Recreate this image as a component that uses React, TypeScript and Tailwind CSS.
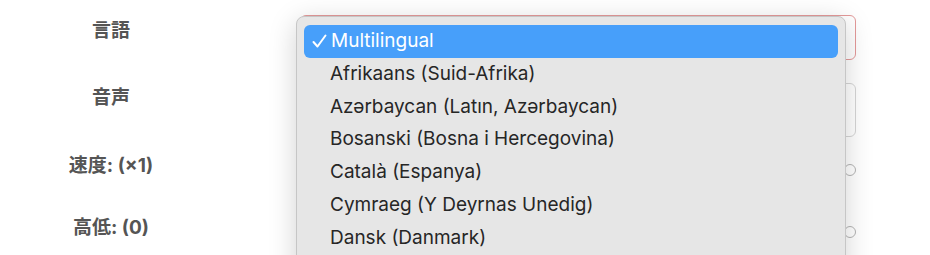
const languages = [
  "Afrikaans (Suid-Afrika)",
  "Azərbaycan (Latın, Azərbaycan)",
  "Bosanski (Bosna i Hercegovina)",
  "Català (Espanya)",
  "Cymraeg (Y Deyrnas Unedig)",
  "Dansk (Danmark)",
];

function Label({ children, className = "" }: { children: React.ReactNode; className?: string }) {
  return (
    <div className={`w-[222px] shrink-0 text-center text-[19px] leading-6 font-bold text-[#555] ${className}`}>
      {children}
    </div>
  );
}

function SliderRow({ label }: { label: string }) {
  return (
    <div className="flex items-center h-[24px]">
      <Label className="mb-[9px]">{label}</Label>
      <div className="ml-[78px] w-[556px] relative h-[12px] flex items-center">
        <div className="w-full h-[4px] rounded-full bg-[#d9d9d9]" />
        <div className="absolute right-0 w-[12px] h-[12px] rounded-full bg-white border border-[#b5b5b5]" />
      </div>
    </div>
  );
}

export default function App() {
  return (
    <div
      className="w-[930px] h-[255px] relative overflow-hidden bg-white"
      style={{ fontFamily: '"Inter", "Noto Sans CJK JP", sans-serif' }}
    >
      <div className="flex flex-col pt-[15px]">
        <div className="flex items-start h-[45px]">
          <Label className="mt-[4px]">言語</Label>
          <div className="ml-[78px] w-[556px] h-[45px] rounded-[6px] border border-[#e49a9a] bg-white" />
        </div>

        <div className="flex items-start h-[54px] mt-[23px]">
          <Label className="mt-[3px]">音声</Label>
          <div className="ml-[78px] w-[556px] h-[54px] rounded-[6px] border border-[#d6d6d6] bg-white" />
        </div>

        <div className="mt-[21px]">
          <SliderRow label="速度: (×1)" />
        </div>
        <div className="mt-[38px]">
          <SliderRow label="高低: (0)" />
        </div>
      </div>

      {/* dropdown menu */}
      <div className="absolute left-[296px] top-[16px] w-[550px] h-[260px] rounded-t-[8px] border border-[#c6c6c6] bg-[#e6e6e6] shadow-[0_6px_28px_rgba(0,0,0,0.18)] px-[7px] pt-[8px]">
        <div className="h-[33px] rounded-[6px] bg-[#479ffa] flex items-center pl-[8px] text-white text-[19px]">
          <svg width="15" height="15" viewBox="0 0 15 15" className="mr-[4px] shrink-0">
            <polyline points="1.5,8 5.5,12.5 13.5,1.5" fill="none" stroke="white" strokeWidth="2" strokeLinecap="round" strokeLinejoin="round" />
          </svg>
          <span>Multilingual</span>
        </div>
        {languages.map((lang) => (
          <div key={lang} className="h-[32.7px] flex items-center pl-[26px] text-[19px] text-[#262626]">
            {lang}
          </div>
        ))}
      </div>
    </div>
  );
}
